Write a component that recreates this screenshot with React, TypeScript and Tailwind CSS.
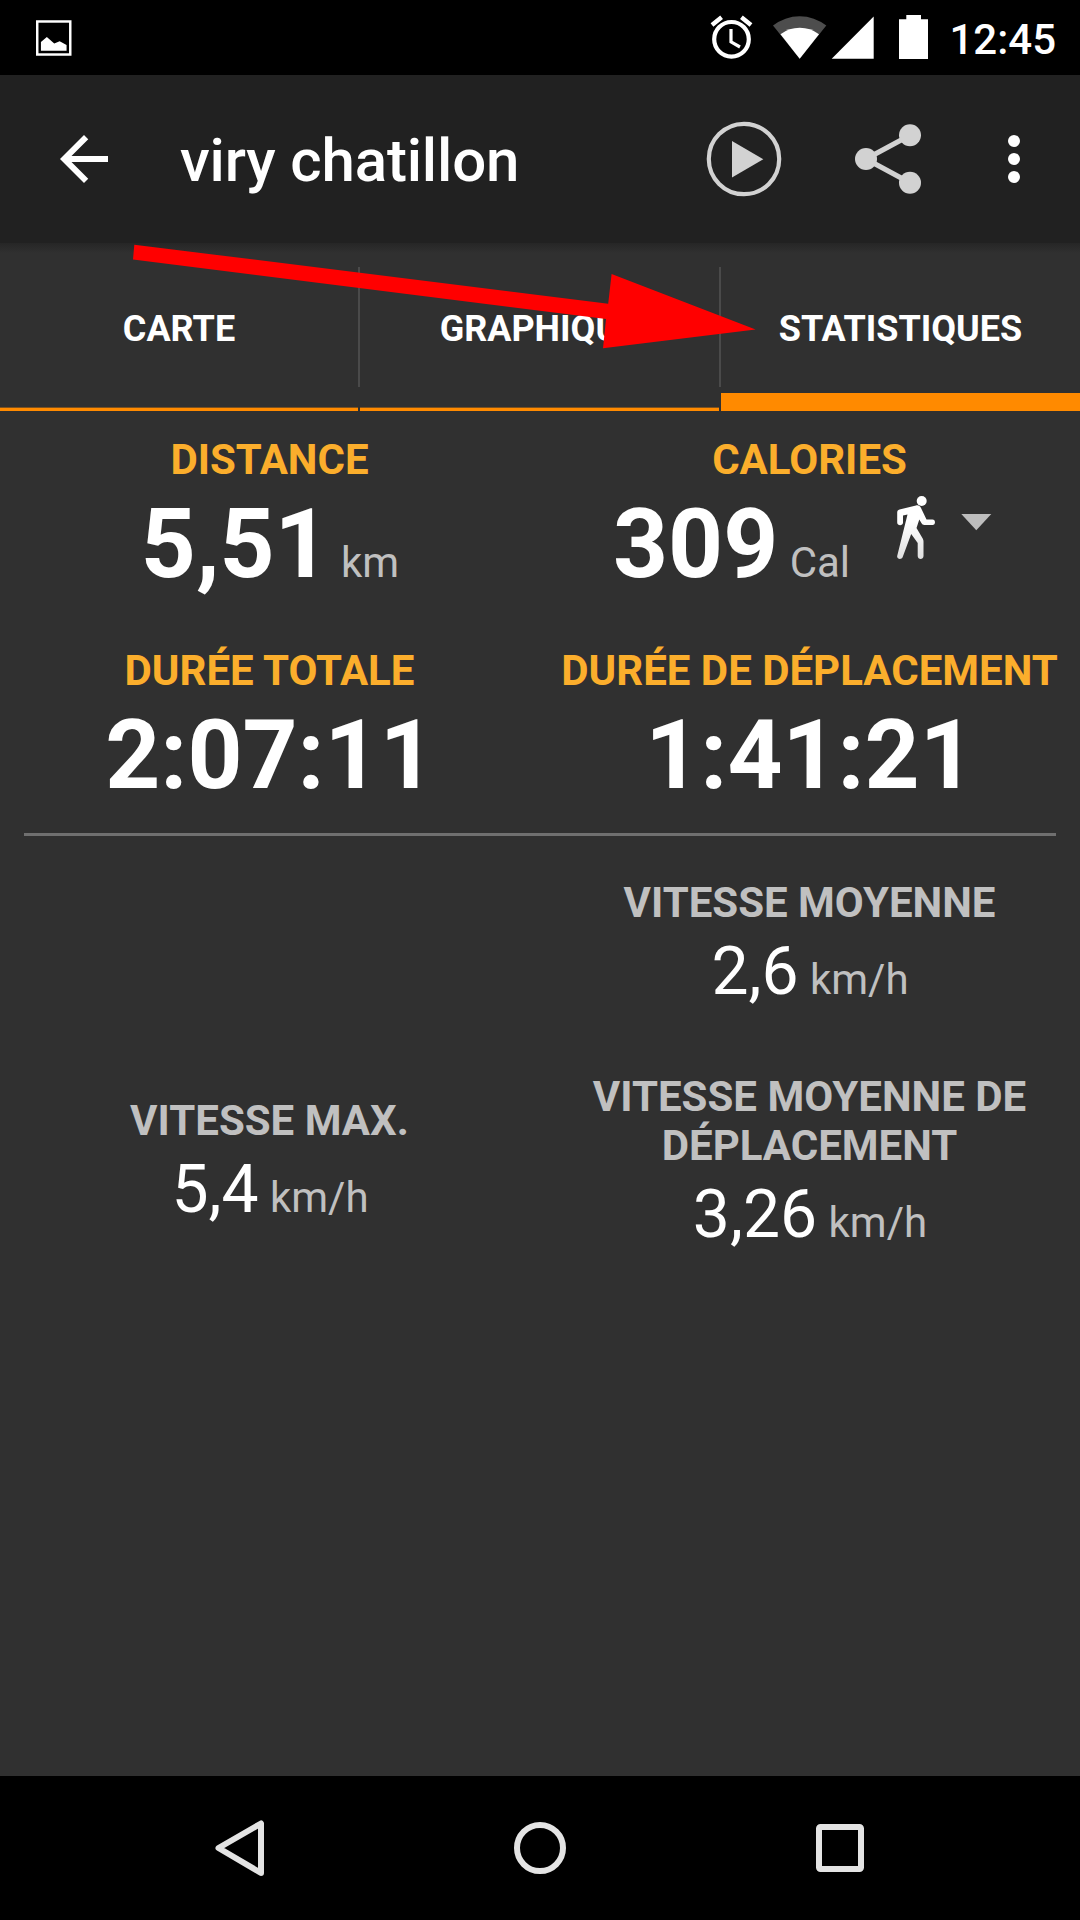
import { clsx } from 'clsx';
import type { ReactNode } from 'react';

const tabs = [
  { label: 'CARTE', width: 'w-[358px]', active: false },
  { label: 'GRAPHIQUE', width: 'w-[359px]', active: false },
  { label: 'STATISTIQUES', width: 'w-[359px]', active: true },
];

function StatusBar() {
  return (
    <header className="flex h-[75px] shrink-0 items-start justify-between bg-black">
      <svg className="ml-9 mt-5" width="35.5" height="36" viewBox="0 0 36 36" fill="#fff">
        <rect x="1.25" y="1.25" width="33.5" height="33.5" fill="none" stroke="#fff" strokeWidth="2.5" />
        <path d="M5 31V22l6-5 7.5 6.5 5.5-2.3 7 4V31z" />
      </svg>
      <div className="flex w-[380px]">
        <svg className="shrink-0" width="240" height="75" viewBox="700 0 240 75" fill="#fff">
          {/* Alarm */}
          <circle cx="731.5" cy="39.3" r="17.3" fill="none" stroke="#fff" strokeWidth="4.2" />
          <path d="M731 29v12.8l9 5.2" fill="none" stroke="#fff" strokeWidth="3.2" />
          <path d="M712 25l9.6-7.8M751 25l-9.600-7.800" stroke="#fff" strokeWidth="4.4" />
          {/* Wifi */}
          <path d="M799.700 58.700L773 25.500a43 43 0 0 1 53.300 0z" fill="#4d4d4d" />
          <path d="M799.700 58.700L780.500 34.300a32 32 0 0 1 38.500 0z" />
          {/* Signal */}
          <path d="M831.700 58.700h42V16.500z" />
          {/* Battery */}
          <path d="M899 59V19.300h7.300V15h14.700v4.300h7V59z" />
        </svg>
        <span className="ml-[9.5px] mt-[15px] text-[42px] font-medium leading-[49px] text-white">12:45</span>
      </div>
    </header>
  );
}

function AppBar() {
  return (
    <div className="flex h-[168px] shrink-0 items-center bg-[#212121]">
      <svg className="ml-12" width="72" height="72" viewBox="0 0 24 24" fill="#fff">
        <path d="M20 11H7.830l5.590-5.590L12 4l-8 8 8 8 1.410-1.410L7.830 13H20v-2z" />
      </svg>
      <h1 className="ml-[60px] mt-[3px] text-[60px] font-medium leading-[70px] tracking-[-0.15px] text-white">
        viry chatillon
      </h1>
      <svg className="ml-auto" width="380" height="168" viewBox="700 75 380 168" fill="#d2d2d2">
        <circle cx="744" cy="159" r="35.2" fill="none" stroke="#d2d2d2" strokeWidth="4.2" />
        <path d="M732 141v36.500l31.300-18.250z" />
        <path d="M910 135.300L866 159l44 23.700" fill="none" stroke="#d2d2d2" strokeWidth="5.200" />
        <circle cx="866" cy="159" r="11" />
        <circle cx="910" cy="135.300" r="11" />
        <circle cx="910" cy="182.700" r="11" />
        <g fill="#fff">
          <circle cx="1014" cy="141" r="6" />
          <circle cx="1014" cy="159" r="6" />
          <circle cx="1014" cy="177" r="6" />
        </g>
      </svg>
    </div>
  );
}

function TabBar() {
  return (
    <nav className="relative flex h-[168px] shrink-0 gap-[2px] bg-linear-to-b from-[#262626] to-[#303030] to-[10px]">
      {tabs.map((tab, i) => (
        <div key={tab.label} className={clsx('relative flex flex-col', tab.width)}>
          <span className="mt-[65px] text-center text-[36px] font-bold leading-[42px] text-white">{tab.label}</span>
          <div
            className={clsx(
              'mt-auto',
              tab.active ? 'h-[18px] bg-[#ff8a00]' : 'h-1 border-t border-[#7d511e] bg-[#ff8a00]',
            )}
          />
          {i < tabs.length - 1 && <div className="absolute -right-[2px] top-6 h-[120px] w-[2px] bg-[#4a4a4a]" />}
        </div>
      ))}
      {/* Pointer towards the active tab */}
      <svg className="absolute left-[130px] top-0" width="630" height="110" viewBox="130 243 630 110">
        <path
          d="M134.300 244.700L608.200 303.700 611.600 274 755.600 329.600 603 348.300 606 319 133 259.500z"
          fill="#f00"
        />
      </svg>
    </nav>
  );
}

function WalkIcon() {
  return (
    <svg className="absolute left-[357px] top-[7px]" width="96" height="66" viewBox="897 495 96 66">
      <defs>
        <linearGradient id="walk" x1="0" y1="0" x2="0" y2="1">
          <stop offset="0.3" stopColor="#fff" />
          <stop offset="1" stopColor="#dedede" />
        </linearGradient>
      </defs>
      <circle cx="921.700" cy="501" r="5" fill="#fff" />
      <path
        d="M916 505.500C918.500 505 920 506 921 508L926.500 519.500H932.500C935.800 519.500 935.800 525 932.500 525H924.500C923 525 922 524.300 921.400 523L919.300 519.500 916.500 528 922.700 538.500C923.300 539.500 923.500 540.500 923.500 541.500V556C923.500 560 917.700 560 917.700 556V543L911.200 534 902.700 557C901.300 560.500 896.200 559 897.300 555.500L907.500 514.500 903 515.500V522.500C903 526 897.200 526 897.200 522.500V512.500C897.200 511 898 509.900 899.500 509.500z"
        fill="url(#walk)"
      />
      <path d="M961.300 514h30L976.300 530.300z" fill="#bdbdbd" />
    </svg>
  );
}

type StatProps = { label: string; value: string; unit?: string; big?: boolean; children?: ReactNode };

function Stat({ label, value, unit, big, children }: StatProps) {
  return (
    <div className="flex flex-col items-center text-center">
      <div
        className={clsx('pr-px text-[42px] font-bold leading-[49px]', big ? 'text-[#fbae2c]' : 'text-[#c0c0c0]')}
      >
        {label}
      </div>
      <div className={clsx('relative w-full', big ? 'mt-1 h-[112px]' : 'mt-[6px] h-[77px]')}>
        <div
          className={clsx(
            'whitespace-pre text-white',
            big ? 'text-[96px] font-bold leading-[112px]' : 'text-[66px] leading-[77px]',
            children && 'pr-[157px]',
          )}
        >
          {value}
          {unit && <span className="ml-px text-[42px] font-normal leading-none text-[#c0c0c0]"> {unit}</span>}
        </div>
        {children}
      </div>
    </div>
  );
}

function NavBar() {
  return (
    <footer className="flex h-36 shrink-0 items-center justify-center bg-black">
      <svg width="660" height="66" viewBox="210 1815 660 66" fill="none" stroke="#e4e4e4" strokeWidth="6">
        <path d="M261 1823.500v49.500L218.500 1848z" strokeLinejoin="round" />
        <circle cx="540" cy="1848" r="23" />
        <rect x="819" y="1827" width="42" height="42" rx="1.500" />
      </svg>
    </footer>
  );
}

export default function App() {
  return (
    <div className="flex h-[1920px] w-[1080px] flex-col overflow-hidden bg-[#303030] font-['Roboto',sans-serif]">
      <StatusBar />
      <AppBar />
      <TabBar />
      <main className="flex-1 pt-6">
        <section className="grid grid-cols-2 gap-y-[46px]">
          <Stat label="DISTANCE" value="5,51" unit="km" big />
          <Stat label="CALORIES" value="309" unit="Cal" big>
            <WalkIcon />
          </Stat>
          <Stat label="DURÉE TOTALE" value="2:07:11" big />
          <Stat label="DURÉE DE DÉPLACEMENT" value="1:41:21" big />
        </section>
        <hr className="mx-6 mt-[22px] h-[3px] border-0 bg-[#6f6f6f]" />
        <section className="mt-[42px] grid grid-cols-2 items-center gap-y-[62px]">
          <div />
          <Stat label="VITESSE MOYENNE" value="2,6" unit="km/h" />
          <div className="pb-[2px]">
            <Stat label="VITESSE MAX." value="5,4" unit="km/h" />
          </div>
          <Stat label="VITESSE MOYENNE DE DÉPLACEMENT" value="3,26" unit="km/h" />
        </section>
      </main>
      <NavBar />
    </div>
  );
}
